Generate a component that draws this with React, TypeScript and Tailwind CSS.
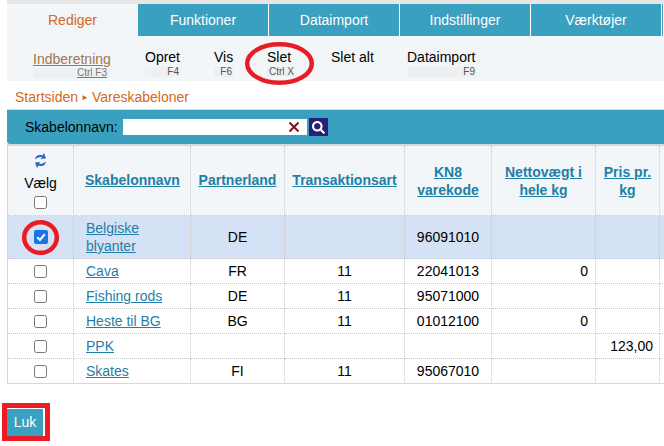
import React from "react";
import { FaSearch } from "react-icons/fa";

const tabs = ["Funktioner", "Dataimport", "Indstillinger", "Værktøjer"];
const menu = [
  { t: "Opret", k: "F4", w: "w-[35px]", pr: "pr-[1px]" },
  { t: "Vis", k: "F6", w: "w-[19px]", pr: "pr-[1px]" },
  { t: "Slet", k: "Ctrl X", w: "w-[30px]", pr: "pr-[3px]" },
  { t: "Slet alt", k: "", w: "w-[42px]", pr: "" },
  { t: "Dataimport", k: "F9", w: "w-[69px]", pr: "pr-[1px]" },
];
const rows = [
  { n: "Cava", p: "FR", a: "11", c: "22041013", v: "0", x: "" },
  { n: "Fishing rods", p: "DE", a: "11", c: "95071000", v: "", x: "" },
  { n: "Heste til BG", p: "BG", a: "11", c: "01012100", v: "0", x: "" },
  { n: "PPK", p: "", a: "", c: "", v: "", x: "123,00" },
  { n: "Skates", p: "FI", a: "11", c: "95067010", v: "", x: "" },
];
const td = "border-r border-b border-dotted border-[#c8c8c8] p-0";
const th = "border-r border-b border-dotted border-[#c8c8c8] p-0 font-bold text-center align-middle";
const hl = "text-[#1f7fa6] underline";
const link = "text-[#1f7fa6] underline";

function Box() {
  return <span className="block mx-auto w-[13px] h-[13px] rounded-[2.5px] border border-[#767676] bg-white" />;
}

export default function App() {
  return (
    <div className="relative w-[664px] h-[446px] overflow-hidden bg-white text-[14px] leading-[17px] text-black" style={{ fontFamily: '"Liberation Sans", Arial, sans-serif' }}>
      <div className="ml-[7px] h-[4px] bg-[#e8e6e4]" />
      <div className="ml-[7px] flex h-[32px]">
        <div className="w-[131px] bg-[#f2f6f8] text-[#d2691e] flex items-center justify-center">Rediger</div>
        {tabs.map((t) => (
          <div key={t} className="w-[130px] mr-[1px] bg-[#3aa0bf] text-white flex items-center justify-center">{t}</div>
        ))}
        <div className="w-[1px] bg-[#3aa0bf] shrink-0" />
      </div>
      <div className="ml-[7px] h-[45px] bg-[#f2f6f8] flex pl-[26px] gap-[34px]">
        <div className="pt-[15px] w-[78px] pr-[1px]">
          <div className="text-[#a5744f] underline">Indberetning</div>
          <div className="mt-[0px] h-[10px] bg-[#eeeff1] text-right text-[10px] leading-[10px] text-[#777] underline pr-[3px]">Ctrl F3</div>
        </div>
        {menu.map((m) => (
          <div key={m.t} className={"pt-[13px] whitespace-nowrap " + m.w}>
            <div>{m.t}</div>
            {m.k && <div className={"mt-[1px] h-[10px] bg-[#eeeff1] text-right text-[10px] leading-[10px] text-[#555] " + m.pr}>{m.k}</div>}
          </div>
        ))}
      </div>
      <div className="ml-[15px] h-[28px] flex items-center pt-[4px] text-[#d2691e]">
        Startsiden
        <span className="mx-[3px] text-[8px]">►</span>
        Vareskabeloner
      </div>
      <div className="ml-[7px] border-t border-[#dcdcdc] h-[37px] border-b-2 border-b-[#d8d8d8]">
        <div className="h-[34px] bg-[#3aa0bf] rounded-bl-[3px] flex items-center pl-[18px]">
          <span className="text-[14px] mr-[5px]">Skabelonnavn:</span>
          <div className="relative w-[184px] h-[16px] bg-white">
            <svg className="absolute left-[165px] top-[2px]" width="12" height="12" viewBox="0 0 12 12">
              <path d="M1.5 1.5L10.5 10.5M10.5 1.5L1.5 10.5" stroke="#8b1010" strokeWidth="2" />
            </svg>
          </div>
          <div className="ml-[2px] w-[19px] h-[18px] bg-[#2a1f78] flex items-center justify-center">
            <FaSearch className="text-white w-[13px] h-[13px]" />
          </div>
        </div>
      </div>
      <table className="ml-[7px] w-[700px] table-fixed border-separate border-spacing-0 border-l border-[#d8d8d8]">
        <colgroup>
          <col className="w-[66px]" />
          <col className="w-[117px]" />
          <col className="w-[94px]" />
          <col className="w-[120px]" />
          <col className="w-[87px]" />
          <col className="w-[104px]" />
          <col className="w-[64px]" />
          <col />
        </colgroup>
        <thead>
          <tr className="h-[70px] bg-[#f2f6f8]">
            <th className={th + " font-normal"}>
              <svg className="block mx-auto mb-[6px]" width="13" height="17" viewBox="0 0 13 17">
                <path d="M1 7.5C1.2 4 4.5 2 8.5 3.5L10 1L12 6.5L6.5 7L8 5.2C5.5 4.5 3.5 5.5 1 7.5Z" fill="#2d62c8" />
                <path d="M12 9.5C11.8 13 8.5 15 4.5 13.5L3 16L1 10.5L6.5 10L5 11.8C7.5 12.5 9.5 11.5 12 9.5Z" fill="#2d62c8" />
              </svg>
              <div className="font-normal">Vælg</div>
              <div className="mt-[4px] mb-[1px]"><Box /></div>
            </th>
            <th className={th + " text-left pl-[11px]"}><span className={hl}>Skabelonnavn</span></th>
            <th className={th}><span className={hl}>Partnerland</span></th>
            <th className={th}><span className={hl}>Transaktionsart</span></th>
            <th className={th}><div className="leading-[18px]"><span className={hl}>KN8<br />varekode</span></div></th>
            <th className={th}><div className="leading-[18px]"><span className={hl}>Nettovægt i<br />hele kg</span></div></th>
            <th className={th}><div className="leading-[18px]"><span className={hl}>Pris pr.<br />kg</span></div></th>
            <th className="border-b border-dotted border-[#c8c8c8]"></th>
          </tr>
        </thead>
        <tbody>
          <tr className="h-[43px] bg-[#d5e1f5]">
            <td className={td}>
              <span className="flex mx-auto w-[14px] h-[14px] rounded-[2px] bg-[#1a73e8] items-center justify-center">
                <svg width="10" height="10" viewBox="0 0 10 10"><path d="M1.2 5.2L4 8L8.8 2.2" fill="none" stroke="#fff" strokeWidth="2" /></svg>
              </span>
            </td>
            <td className={td + " pl-[12px] leading-[18px]"}><span className={link}>Belgiske<br />blyanter</span></td>
            <td className={td + " text-center"}>DE</td>
            <td className={td}></td>
            <td className={td + " text-center"}>96091010</td>
            <td className={td}></td>
            <td className={td}></td>
            <td className="border-b border-dotted border-[#c8c8c8]"></td>
          </tr>
          {rows.map((r, i) => {
            const last = i === rows.length - 1;
            const cell = last
              ? "border-r border-r-[#c8c8c8] border-dotted border-b border-b-[#d8d8d8] [border-bottom-style:solid] p-0"
              : td;
            return (
              <tr key={r.n} className="h-[25px]">
                <td className={cell}><Box /></td>
                <td className={cell + " pl-[12px]"}><span className={link}>{r.n}</span></td>
                <td className={cell + " text-center"}>{r.p}</td>
                <td className={cell + " text-center"}>{r.a}</td>
                <td className={cell + " text-center"}>{r.c}</td>
                <td className={cell + " text-right pr-[7px]"}>{r.v}</td>
                <td className={cell + " text-right pr-[6px]"}>{r.x}</td>
                <td className={last ? "border-b border-[#d8d8d8]" : "border-b border-dotted border-[#c8c8c8]"}></td>
              </tr>
            );
          })}
        </tbody>
      </table>
      <div className="ml-[2px] mt-[19px] w-[48px] h-[38px] border-[5px] border-[#ed1c24] pt-[1px]">
        <div className="w-[36px] h-[27px] bg-[#3aa0bf] text-white flex items-center justify-center">Luk</div>
      </div>
      <svg className="absolute left-[244px] top-[41px]" width="72" height="46" viewBox="0 0 72 46">
        <ellipse cx="35.5" cy="22.5" rx="32.3" ry="19.3" fill="none" stroke="#e81c24" strokeWidth="4.5" />
      </svg>
      <svg className="absolute left-[20px] top-[218px]" width="42" height="40" viewBox="0 0 42 40">
        <ellipse cx="20.5" cy="19.5" rx="16.3" ry="15.3" fill="none" stroke="#e81c24" strokeWidth="4.5" />
      </svg>
    </div>
  );
}
